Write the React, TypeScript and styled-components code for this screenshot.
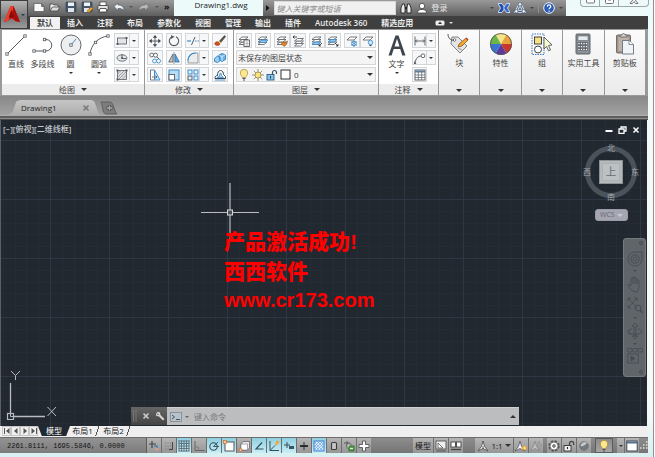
import React from "react";
import styled, { createGlobalStyle, css } from "styled-components";

const Global = createGlobalStyle`
  * { box-sizing: border-box; }
  html, body { margin: 0; padding: 0; }
  body {
    font-family: "Open Sans", "Noto Sans CJK SC", sans-serif;
    font-size: 8px;
    line-height: 10px;
    color: #333;
    background: #f4fbfb;
  }
  button, input, select {
    font: inherit;
    color: inherit;
    margin: 0;
    padding: 0;
    border: 0;
    background: none;
    border-radius: 0;
    outline: 0;
    appearance: none;
  }
  svg { display: block; flex: none; }
`;

/* ---------- drawings ---------- */

const INK = "#555a60";
const BLUE = "#3d8ccc";

type Drawing = { w: number; h: number; art: React.ReactNode };

const node = (x: number, y: number) => (
  <rect x={x - 1.2} y={y - 1.2} width="2.4" height="2.4" fill="#fff" stroke={INK} strokeWidth=".8" />
);

const layerStack = (
  <g fill="#fff" stroke="#555b60" strokeWidth=".8">
    <path d="M1 9.500 4 7h6l-3 2.500z" />
    <path d="M1 7 4 4.500h6L7 7z" />
    <path d="M1 4.500 4 2h6L7 4.500z" />
  </g>
);

const drawings: Record<string, Drawing> = {
  logo: {
    w: 18, h: 20,
    art: (
      <>
        <path d="M1 18 8 1h3l7 17-5-1-4-3-4 3z" fill="#c5160d" />
        <path d="M8 1h3l-1 8-5 8-4 1z" fill="#e8412f" />
        <path d="M9 5 12 13 9 14 6 13z" fill="#8b0b06" />
        <path d="M10 9 13 17l5 1-7-17z" fill="#a90f0a" />
      </>
    ),
  },
  newFile: { w: 12, h: 12, art: <path d="M1 2.500h7.500l2.500 3v5H1z M8.500 2.500v3H11" fill="#f8f8f8" stroke="#555" strokeWidth=".7" /> },
  open: {
    w: 12, h: 12,
    art: <><path d="M1 10V3h3l1 1h4v2" fill="#eee" stroke="#444" strokeWidth=".8" /><path d="M1 10 3.500 6H11L8.500 10z" fill="#d9dde0" stroke="#444" strokeWidth=".8" /></>,
  },
  save: {
    w: 12, h: 12,
    art: <><rect x="1" y="1" width="10" height="10" rx="1" fill="#43566b" stroke="#2e3c4c" strokeWidth=".6" /><rect x="3" y="1.500" width="6" height="3.500" fill="#f0f3f5" /><rect x="3" y="7" width="6" height="4" fill="#dfe5ea" /></>,
  },
  saveAs: {
    w: 12, h: 12,
    art: <><rect x="1" y="1" width="10" height="10" rx="1" fill="#43566b" stroke="#2e3c4c" strokeWidth=".6" /><rect x="3" y="1.500" width="6" height="3.500" fill="#f0f3f5" /><rect x="3" y="7" width="5" height="4" fill="#dfe5ea" /><path d="m6 10 4-4 2 1.500-4 4z" fill="#f0a32c" stroke="#87571b" strokeWidth=".5" /></>,
  },
  print: {
    w: 12, h: 12,
    art: <><rect x="3" y="1" width="6" height="4" fill="#fff" stroke="#444" strokeWidth=".7" /><rect x=".8" y="4.500" width="10.400" height="4.500" rx="1" fill="#e4e4e4" stroke="#333" strokeWidth=".8" /><path d="M3 7.500h6l1 3.500H2z" fill="#fff" stroke="#333" strokeWidth=".8" /></>,
  },
  undo: { w: 12, h: 12, art: <path d="M1 5.500 5 2v2c4 0 6 2 6 6-1-2-3-2.500-6-2.500V9.500z" fill="#eef1f3" stroke="#4a5a6a" strokeWidth=".7" /> },
  redo: { w: 12, h: 12, art: <path d="M11 5.500 7 2v2C3 4 1 6 1 10c1-2 3-2.500 6-2.500V9.500z" fill="#b9b9b9" stroke="#6d6d6d" strokeWidth=".7" /> },
  binoculars: {
    w: 12, h: 12,
    art: <><path d="M1 11V6l1.500-4h2L5 6v5zM7 11V6l.5-4h2L11 6v5z" fill="#eee" stroke="#222" strokeWidth=".9" /><path d="M5 5h2v2H5z" fill="#222" /></>,
  },
  user: {
    w: 12, h: 12,
    art: <><circle cx="6" cy="4" r="2.700" fill="#fff" stroke="#3c3c3c" strokeWidth=".8" /><path d="M1.500 11c0-3 2-3.500 4.500-3.500s4.500.5 4.500 3.500z" fill="#fff" stroke="#3c3c3c" strokeWidth=".8" /></>,
  },
  exchange: { w: 12, h: 12, art: <><path d="M0 1.500h4L7 6l-3 4.500H0L2.500 6z" fill="#2450a8" stroke="#dfe8ff" strokeWidth=".8" /><path d="M12 1.500H8.500L5.500 6l3 4.500H12L9.500 6z" fill="#3567c9" stroke="#dfe8ff" strokeWidth=".8" /></> },
  network: {
    w: 12, h: 12,
    art: <g fill="none" stroke="#e6efff" strokeWidth="2.600"><path d="M6 2 2 9.500h8z" /><g stroke="#3c557c" strokeWidth=".9"><path d="M6 2 2 9.500h8z" /></g><g fill="#fff" stroke="#3c557c" strokeWidth=".8"><circle cx="6" cy="2.300" r="1.700" /><circle cx="2.300" cy="9.300" r="1.700" /><circle cx="9.700" cy="9.300" r="1.700" /></g></g>,
  },
  help: {
    w: 12, h: 12,
    art: <><circle cx="6" cy="6" r="5.300" fill="#2b5bb5" stroke="#e9f0fb" strokeWidth="1" /><path d="M4.300 4.700c0-2.400 3.500-2.200 3.500-.2 0 1.300-1.700 1.300-1.700 2.800M6.100 8.500v1.200" fill="none" stroke="#fff" strokeWidth="1.200" /></>,
  },
  line: { w: 22, h: 22, art: <><path d="M2 20 20 2" stroke={INK} strokeWidth="1" />{node(2, 20)}{node(20, 2)}</> },
  polyline: { w: 22, h: 22, art: <><path d="M2 17h12a5.700 5.700 0 0 0 0-11.500h-1" fill="none" stroke={INK} />{node(2, 17)}{node(12.500, 17)}{node(12.500, 5.500)}</> },
  circle: {
    w: 22, h: 22,
    art: <><circle cx="11" cy="11" r="10" fill="#eceef0" stroke={INK} strokeWidth=".9" /><path d="M11 11 16 5" stroke="#2f7fc8" strokeWidth=".9" />{node(11, 11)}</>,
  },
  arc: { w: 22, h: 22, art: <><path d="M2 20C3 11 10 3 20 2" fill="none" stroke={INK} />{node(2, 20)}{node(7.500, 8.500)}{node(20, 2)}</> },
  rect: { w: 12, h: 12, art: <><rect x="1.500" y="3" width="9" height="6" fill="#e2e5e8" stroke={INK} strokeWidth=".8" /><g fill={INK}><rect x=".5" y="8" width="2" height="2" /><rect x="9.500" y="2" width="2" height="2" /></g></> },
  ellipse: { w: 12, h: 12, art: <><ellipse cx="6" cy="6" rx="5" ry="3.200" fill="#e2e5e8" stroke={INK} strokeWidth=".8" /><path d="M6 2v4.500h4" stroke={INK} strokeWidth=".9" fill="none" /><circle cx="6" cy="6" r="1" fill={INK} /></> },
  hatch: { w: 12, h: 12, art: <><rect x="1.500" y="1.500" width="9" height="9" fill="#ddd" stroke={INK} strokeWidth=".8" /><path d="M1.500 5 5 1.500M1.500 8.500l7-7M2.500 10.500l8-8M6 10.500 10.500 6" stroke="#8c9399" strokeWidth=".8" /><g fill={INK}><rect x=".5" y=".5" width="2" height="2" /><rect x="9.500" y=".5" width="2" height="2" /><rect x=".5" y="9.500" width="2" height="2" /></g></> },
  move: { w: 12, h: 12, art: <><path d="M6 2v8M2 6h8" stroke={INK} strokeWidth=".9" /><path d="m6 0 2.200 2.800H3.800zM6 12 3.800 9.200h4.400zM0 6l2.800-2.200v4.400zM12 6 9.200 8.200V3.800z" fill="#3f454b" /></> },
  rotate: { w: 12, h: 12, art: <><path d="M4 1.700a4.700 4.700 0 1 0 4 0" fill="none" stroke={INK} strokeWidth="1.100" /><path d="M3 0v4L6.500 1.800z" fill={INK} /></> },
  trim: { w: 12, h: 12, art: <><path d="M0 6h4" stroke={BLUE} strokeWidth="1.200" /><path d="M4.500 10 8 2" stroke={INK} strokeWidth="1" /><path d="M8 6h1.500M10.500 6H12" stroke={BLUE} strokeWidth="1" /></> },
  erase: { w: 12, h: 12, art: <><path d="m5 6.500 5.500-6 1.200 1L6.500 8z" fill="#5d5348" stroke="#3c352d" strokeWidth=".5" /><path d="m4 7 1.500-1 1.500 1.500L6 9z" fill="#f0c04c" /><path d="M.5 9c1-2.500 2.500-2.500 3.500-2l2 2C5 11 2.500 11 .5 9z" fill="#d14c25" stroke="#8a2f17" strokeWidth=".5" /></> },
  copy: { w: 12, h: 12, art: <g fill="#fff" strokeWidth=".9"><g stroke={INK}><circle cx="2.700" cy="3" r="1.900" /><circle cx="6.500" cy="3.200" r="2" /></g><g stroke={BLUE}><circle cx="5.500" cy="9" r="1.900" /><circle cx="9.500" cy="9" r="2" /></g><path d="m8 5 2 2" stroke={INK} /></g> },
  mirror: { w: 12, h: 12, art: <><path d="M5 2v8H.7z" fill="#bfc5ca" stroke={INK} strokeWidth=".8" /><path d="M7 2v8h4.300z" fill="#5ea7df" stroke="#2d6ea8" strokeWidth=".8" /><path d="M6 0v12" stroke={INK} strokeWidth=".6" /></> },
  fillet: { w: 12, h: 12, art: <><path d="M1 11V8a7 7 0 0 1 7-7h3v10z" fill="#e9ecef" stroke="#777" strokeWidth=".7" /><path d="M1 8.500A7.500 7.500 0 0 1 8.500 1" fill="none" stroke={BLUE} strokeWidth="1.200" /></> },
  explode: { w: 12, h: 12, art: <><path d="M.5 6.500 3.500 4l3 1v3.500l-3 2-3-1z" fill="#9bd0f2" stroke="#2d7fbe" strokeWidth=".9" /><path d="m5 3 3-1.500L11.500 3v4.500L8 9.500 5.500 8z" fill="#6db4e6" stroke="#2d7fbe" strokeWidth=".9" /><path d="m5.500 3.500 2.500 1 3-1.500M8 4.500v4.500" stroke="#e9f6ff" strokeWidth=".8" fill="none" /></> },
  stretch: { w: 12, h: 12, art: <><path d="M1.500 1h4v10h-4z" fill="#fff" stroke={INK} strokeWidth=".8" /><path d="M5.500 1 11 11H5.500z" fill="#c9e4f7" stroke={BLUE} strokeWidth=".9" /><path d="M3 8h5M6.500 6.500 8 8 6.500 9.500" stroke={INK} fill="none" strokeWidth=".8" /></> },
  scale: { w: 12, h: 12, art: <><rect x="1" y="1" width="10" height="10" fill="#b9dcf5" stroke={BLUE} strokeWidth="1" /><rect x="1" y="5.500" width="5.500" height="5.500" fill="#fff" stroke={INK} strokeWidth=".9" /></> },
  array: { w: 12, h: 12, art: <g fill="#e4f2fc" stroke={BLUE} strokeWidth="1"><rect x="1" y="1" width="4" height="4" /><rect x="7" y="1" width="4" height="4" /><rect x="1" y="7" width="4" height="4" stroke={INK} /><rect x="7" y="7" width="4" height="4" /></g> },
  offset: { w: 12, h: 12, art: <><path d="M1 9.500c0-2 1-3 2.500-3 0-3 1-5 3-5s3 2 3 4l2 2v2z" fill="#fff" stroke="#3d444b" strokeWidth="1" /><path d="M3 8.500h6.500L7.500 6.500C7.500 4.500 7 4 6.500 4s-1 1.500-1 3z" fill="#a6d4f4" stroke={BLUE} strokeWidth=".8" /><path d="M1 11h10.500" stroke={BLUE} strokeWidth=".9" /></> },
  layerProps: { w: 12, h: 12, art: <>{layerStack}<rect x="6" y="5" width="5.500" height="6.500" fill="#fff" stroke="#444" strokeWidth=".8" /><path d="M7.500 7h3M7.500 8.500h3M7.500 10h3" stroke="#777" strokeWidth=".6" /></> },
  layerBlue: { w: 12, h: 12, art: <>{layerStack}<path d="M2 7.500 5 5h6L8 7.500z" fill="#8dc6f2" stroke={BLUE} strokeWidth=".9" /></> },
  layerOrange: { w: 12, h: 12, art: <>{layerStack}<path d="m6 7 3 1 2.500-2-1 3.500L8 11.500 5.500 9z" fill="#e78b2c" stroke="#8a4c14" strokeWidth=".6" /></> },
  layerArrow: { w: 12, h: 12, art: <><g transform="translate(1.500 1.500)">{layerStack}</g><path d="M5 2H1M2.500.5 1 2l1.500 1.500" stroke="#222" fill="none" strokeWidth=".8" /></> },
  layerIso: { w: 12, h: 12, art: <>{layerStack}<path d="M1 9.500 4 7h6l-3 2.500z" fill="#8dc6f2" stroke={BLUE} strokeWidth=".8" /><path d="m11 8-3 3M8 9v2h2" stroke="#222" fill="none" strokeWidth=".8" /></> },
  layerUniso: { w: 12, h: 12, art: <>{layerStack}<path d="M1 7 4 4.500h6L7 7z" fill="#8dc6f2" stroke={BLUE} strokeWidth=".8" /><path d="m8 8 3 3M11 9v2H9" stroke="#222" fill="none" strokeWidth=".8" /></> },
  layerFreeze: { w: 12, h: 12, art: <><path d="M1 5 4 2h7L8 5z" fill="#fff" stroke="#555" strokeWidth=".8" /><circle cx="8" cy="8.500" r="2.300" fill="#fff" stroke={BLUE} strokeWidth="1" /><path d="M8 5v7M5 6.500l6 4M11 6.500l-6 4" stroke={BLUE} strokeWidth=".7" /></> },
  layerOff: { w: 12, h: 12, art: <><path d="M1 5 4 2h7L8 5z" fill="#fff" stroke="#555" strokeWidth=".8" /><circle cx="8.500" cy="7.500" r="2.200" fill="#d6ebfb" stroke={BLUE} strokeWidth=".9" /><path d="M7.500 10.500h2" stroke="#444" strokeWidth="1.200" /></> },
  bulb: { w: 12, h: 12, art: <><path d="M4.300 8.500C4 7 2.300 6 2.300 4a3.700 3.700 0 0 1 7.400 0c0 2-1.700 3-2 4.500z" fill="#fbe88d" stroke="#a8873a" strokeWidth=".7" /><path d="M4.500 9.500h3M5 11h2" stroke="#555" strokeWidth="1" /></> },
  sun: { w: 12, h: 12, art: <><path d="M6 0v12M0 6h12M1.800 1.800l8.400 8.400M10.200 1.800l-8.400 8.400" stroke="#8d7a4d" strokeWidth=".8" /><circle cx="6" cy="6" r="3" fill="#fbe27a" stroke="#8d7a4d" strokeWidth=".7" /></> },
  unlock: { w: 12, h: 12, art: <><path d="M6.500 6V3.500a2 2 0 0 1 4 0V5" fill="none" stroke="#39536b" strokeWidth="1.200" /><rect x="1" y="5.500" width="7" height="5.500" fill="#86c3ea" stroke="#2b5d84" strokeWidth=".9" /><path d="M4.500 7v2.500" stroke="#1d3f5b" strokeWidth="1" /></> },
  swatch: { w: 11, h: 11, art: <rect x="1" y="1" width="9" height="9" fill="#fff" stroke="#333" /> },
  textA: { w: 22, h: 22, art: <path d="M2.500 21.500 9.500 1.500h3L19.500 21.500h-3.200L14.200 15H7.700l-2.100 6.500zM8.500 12.500h5L11 4.800z" fill="#3f454c" /> },
  dimension: { w: 12, h: 12, art: <path d="M1 1.500v9M11 1.500v9M1 6h10M3 4.500 1.500 6 3 7.500M9 4.500 10.500 6 9 7.500" fill="none" stroke={INK} strokeWidth=".9" /> },
  leader: { w: 12, h: 12, art: <><path d="M1 11c1-5 3-7 6.500-7" fill="none" stroke={INK} strokeWidth="1" /><circle cx="9" cy="3.800" r="1.900" fill="#fff" stroke={INK} strokeWidth=".9" /><path d="M0 9v3h2.500z" fill={INK} /></> },
  tableGrid: { w: 12, h: 12, art: <><rect x="1" y="1" width="10" height="10" fill="#fff" stroke={INK} strokeWidth=".9" /><path d="M1 2.500h10" stroke="#62809c" strokeWidth="2" /><path d="M1 6h10M1 8.500h10M4.300 3v8M7.700 3v8" stroke={INK} strokeWidth=".7" /></> },
  block: {
    w: 24, h: 22,
    art: <><path d="M5 4h6l9 9-7 7-9-9z" fill="#e3e5e7" stroke="#70767b" strokeWidth=".9" /><circle cx="7.500" cy="7" r="1.300" fill="#fff" stroke="#666" strokeWidth=".8" /><path d="M7 7C4 8 1 5 1 1" fill="none" stroke="#444" strokeWidth=".9" /><path d="m12 11 7-6 2 2-6 6-4 1z" fill="#f3a632" stroke="#7d4c10" strokeWidth=".7" /><path d="m19 5 2 2" stroke="#b33" strokeWidth="1.500" /><path d="m11 15 4 2" stroke="#888" strokeWidth=".8" /></>,
  },
  wheel: {
    w: 22, h: 22,
    art: (
      <>
        <path d="M11 11 5.500 1.500a11 11 0 0 1 11 0z" fill="#f3e58a" />
        <path d="M11 11 16.500 1.500A11 11 0 0 1 22 11z" fill="#e8a33c" />
        <path d="M11 11h11a11 11 0 0 1-5.500 9.500z" fill="#c9362c" />
        <path d="M11 11 16.500 20.500a11 11 0 0 1-11 0z" fill="#5a3a9c" />
        <path d="M11 11 5.500 20.500A11 11 0 0 1 0 11z" fill="#3b74d0" />
        <path d="M11 11H0A11 11 0 0 1 5.500 1.500z" fill="#6db548" />
        <circle cx="11" cy="11" r="10.500" fill="none" stroke="#5b5b5b" strokeWidth=".9" />
      </>
    ),
  },
  group: {
    w: 22, h: 22,
    art: <><rect x="1" y="1" width="12" height="20.500" fill="none" stroke="#3c78c0" strokeWidth="1" strokeDasharray="1.500 1" /><rect x="3.500" y="4" width="7" height="7" fill="#f6e27e" stroke="#444" strokeWidth="1" /><circle cx="7" cy="16.500" r="3.500" fill="#fff" stroke="#444" strokeWidth="1" /><path d="m13 4 8 8-3.500.5 2 4.500-2 .8-2-4.500L13 16z" fill="#fbf8cf" stroke="#37474f" strokeWidth=".8" /></>,
  },
  calculator: {
    w: 22, h: 22,
    art: <><rect x="4" y="1" width="14" height="20" rx="1" fill="#8b9198" stroke="#54595e" strokeWidth=".9" /><rect x="6" y="3" width="10" height="4.500" fill="#e3edf2" stroke="#555" strokeWidth=".5" /><g fill="#fff" stroke="#4a4f55" strokeWidth=".6">{[9.500, 12.500, 15.500].map((y) => [6, 8.500, 11, 13.500].map((x) => <rect key={`${x}-${y}`} x={x} y={y} width="2" height="2" />))}</g></>,
  },
  clipboard: {
    w: 22, h: 22,
    art: <><rect x="2.500" y="2" width="14" height="18" rx="1" fill="#a0938a" stroke="#6d625a" strokeWidth=".9" /><rect x="4.500" y="4" width="10" height="14" fill="#beb3aa" /><path d="M6 4V2h2c0-2 3-2 3 0h2v2z" fill="#d0d4d8" stroke="#555" strokeWidth=".7" /><path d="M8.500 7.500H15l4.500 4V21H8.500z" fill="#f0f4f8" stroke="#67727c" strokeWidth=".9" /><path d="M15 7.500v4h4.500" fill="#fff" stroke="#67727c" strokeWidth=".8" /></>,
  },
  panelToggle: { w: 10, h: 6, art: <><rect x=".5" y=".5" width="9" height="5" rx="1.500" fill="#eee" /><path d="M5 1.500 7 4H3z" fill="#333" /></> },
  close: { w: 8, h: 8, art: <path d="m1.500 1.500 5 5M6.500 1.500l-5 5" stroke="currentColor" strokeWidth="1.500" /> },
  mdiMin: { w: 8, h: 8, art: <path d="M.5 5h7" stroke="#fff" strokeWidth="2" /> },
  mdiRestore: { w: 9, h: 8, art: <path d="M3 3V1h5v4H6M1 3h5v4.500H1z" fill="none" stroke="#fff" strokeWidth="1.300" /> },
  wrench: { w: 10, h: 10, art: <path d="M1 2.500 2.500 1C5 .5 5.500 2 5.300 3.700L9.500 8 8 9.500 3.700 5.300C2 5.500.5 5 1 2.500L3 4l1-1z" fill="#d4d4d4" /> },
  prompt: { w: 12, h: 10, art: <><rect x=".5" y=".5" width="11" height="9" fill="#b9c2cc" stroke="#7d8893" strokeWidth=".8" /><path d="m2 3 2.500 2L2 7M6 7.500h4" fill="none" stroke="#455" strokeWidth="1" /></> },
  plusTab: { w: 18, h: 14, art: <><path d="M1 1h9c4 0 4 10 7 12H6C2 13 3 4 1 1z" fill="#7d7d7d" stroke="#555" strokeWidth=".8" /><path d="M9.500 4v6M6.500 7h6" stroke="#4f4f4f" strokeWidth="3" /><path d="M9.500 4.500v5M7 7h5" stroke="#a8a8a8" strokeWidth="1.400" /></> },
  grips: { w: 4, h: 12, art: <path d="M.5.5v11M3 .5v11" stroke="#999" strokeWidth="1" strokeDasharray="1 1" /> },
  winMin: { w: 9, h: 6, art: <rect x=".5" y="-1" width="8" height="4" rx="1" fill="#fff" stroke="#666" strokeWidth=".9" /> },
  winMax: { w: 9, h: 6, art: <><rect x=".5" y="-4" width="8" height="7.500" rx="1" fill="#fff" stroke="#666" strokeWidth=".9" /><path d="M3 0h3" stroke="#666" /></> },
  winClose: { w: 10, h: 6, art: <path d="m1 3.500 4-5 4 5H6.500L5 1.500 3.500 3.500z" fill="#fff" stroke="#666" strokeWidth=".9" /> },
  /* status bar */
  infer: { w: 12, h: 12, art: <><path d="M4 1v7M1 4h7" stroke="#444" strokeWidth="1.200" /><path d="M6 6h3v3" stroke="#35699f" fill="none" strokeWidth="1.200" /><circle cx="9" cy="9" r="1.500" fill="#e8a47c" /><path d="M9.500 5.500v3" stroke="#4f8fcf" /></> },
  snap: { w: 12, h: 12, art: <><path d="M2 3h7M2 6h7M2 9h7" stroke="#777" strokeWidth="1" strokeDasharray="1 1.500" /><path d="M9.500 2v7.500H6" stroke="#444" fill="none" strokeWidth="1" /></> },
  grid: { w: 12, h: 12, art: <path d="M.5 1h11M.5 3.500h11M.5 6h11M.5 8.500h11M.5 11h11M1 .5v11M3.500.5v11M6 .5v11M8.500.5v11M11 .5v11" stroke="#5f6a76" strokeWidth=".9" /> },
  ortho: { w: 12, h: 12, art: <><path d="M2 1v9.500h9.500" stroke="#666" fill="none" strokeWidth="1" /><path d="M2 7h3.500v3.500" stroke="#777" fill="none" strokeWidth=".8" /></> },
  polar: { w: 12, h: 12, art: <><circle cx="5.500" cy="6.500" r="3.700" fill="none" stroke="#33505f" strokeWidth="1.100" /><path d="m5.500 6.500 4.500-4.500M5.500 6.500H11" stroke="#33505f" strokeWidth=".9" /></> },
  osnap: { w: 12, h: 12, art: <><rect x="2" y="2" width="9" height="9" fill="#fff" stroke="#555" strokeWidth="1" /><rect x=".5" y=".5" width="3" height="3" fill="#f6c59c" stroke="#cf6e2c" strokeWidth=".7" /></> },
  osnap3d: { w: 12, h: 12, art: <><path d="M3 4 5 1.500h6.500V8L9.500 10H3z" fill="#e9ebee" stroke="#666" strokeWidth=".8" /><rect x="3" y="4" width="6.500" height="6" fill="#fff" stroke="#777" strokeWidth=".6" /><circle cx="2.500" cy="10" r="1.500" fill="#f6c59c" stroke="#cf5e2c" strokeWidth=".7" /></> },
  otrack: { w: 12, h: 12, art: <path d="M9 2.500 3 9h7.500" stroke="#33505f" fill="none" strokeWidth="1.200" /> },
  ducs: { w: 12, h: 12, art: <><path d="M2 1v9.500h9M2 10.500 7 5.500" stroke="#33505f" fill="none" strokeWidth="1" /><path d="m7 5 1.500-4.500 3 1L9 5z" fill="#f3a632" /></> },
  dyn: { w: 12, h: 12, art: <><path d="M4 2v6M1 5h6" stroke="#33505f" strokeWidth="1" /><path d="M6 6h5v3H6z" fill="#3b5560" /></> },
  lweight: { w: 12, h: 12, art: <><path d="M6 2v8" stroke="#333" strokeWidth="1" /><path d="M2 6h8" stroke="#222" strokeWidth="1.800" /></> },
  transparency: { w: 12, h: 12, art: <><rect x="1" y="1" width="10" height="10" fill="#dcecff" stroke="#3f7fce" strokeWidth="1" /><path d="m1 4 3-3M1 7l6-6M1 10l9-9M3 11l8-8M6 11l5-5M9 11l2-2M1 8l3 3M1 5l6 6M1 2l9 9M4 1l7 7M7 1l4 4" stroke="#5f9ae0" strokeWidth=".6" /></> },
  quickProps: { w: 12, h: 12, art: <rect x="3.500" y="2.500" width="5" height="7" rx="1" fill="#c4c4c4" stroke="#3c3c3c" strokeWidth="1.100" /> },
  selCycle: { w: 12, h: 12, art: <><path d="M4 1v6M1 3h6" stroke="#555" strokeWidth=".9" /><rect x="4" y="4" width="4" height="4" fill="#ddd" stroke="#555" strokeWidth=".7" /><rect x="6" y="6" width="5" height="5" fill="#59a94c" stroke="#2c6624" strokeWidth=".8" /><path d="M7 8.500h3" stroke="#fff" strokeWidth=".8" /></> },
  annoMonitor: { w: 12, h: 12, art: <path d="M4.500 1h3v3.500H11v3H7.500V11h-3V7.500H1v-3h3.500z" fill="#fff" stroke="#555" strokeWidth=".9" /> },
  layoutView: { w: 12, h: 12, art: <><rect x="1" y="1" width="10" height="8" fill="#eee" stroke="#555" strokeWidth=".9" /><path d="m3 3 5 5H3z" fill="#fff" stroke="#555" strokeWidth=".8" /><path d="M1 11h10" stroke="#555" /></> },
  quickView: { w: 12, h: 12, art: <><rect x="1" y="2" width="4.500" height="5" fill="#fff" stroke="#444" strokeWidth=".9" /><rect x="6.500" y="2" width="4.500" height="5" fill="#fff" stroke="#444" strokeWidth=".9" /><path d="M1 9.500h10" stroke="#444" strokeWidth="1.300" /></> },
  anno: { w: 12, h: 12, art: <><path d="m6 1 1.500 5.500L11 11 6 8.500 1 11l3.500-4.500z" fill="#fff" stroke="#444" strokeWidth=".8" /><path d="M6 6v3" stroke="#333" strokeWidth=".8" /></> },
  annoVis: { w: 12, h: 12, art: <><path d="m5 1 1.500 5.500L10 11 5 8.500 0 11l3.500-4.500z" fill="#fff" stroke="#555" strokeWidth=".8" /><circle cx="9.500" cy="8" r="2.300" fill="#f7a93a" /><circle cx="9.500" cy="8" r="1" fill="#fff2a8" /></> },
  annoAuto: { w: 12, h: 12, art: <><path d="m5 1 1.500 5.500L10 11 5 8.500 0 11l3.500-4.500z" fill="#c4c4c4" stroke="#888" strokeWidth=".8" /><path d="m9 1-2 5h2l-1 5 4-6H9.500z" fill="#aaa" stroke="#888" strokeWidth=".5" /></> },
  gear: { w: 12, h: 12, art: <><circle cx="6" cy="6" r="4.600" fill="none" stroke="#555" strokeWidth="2.200" strokeDasharray="2.300 1.310" /><circle cx="6" cy="6" r="4" fill="#f8f8f8" stroke="#555" strokeWidth=".7" /><circle cx="6" cy="6" r="1.400" fill="#999" stroke="#555" strokeWidth=".7" /></> },
  toolbarLock: { w: 12, h: 12, art: <><path d="M6.500 6V3.500a2 2 0 0 1 4.200 0V5" fill="none" stroke="#444" strokeWidth="1.200" /><rect x="1" y="5.500" width="7" height="5.500" fill="#eee" stroke="#333" strokeWidth=".9" /><path d="M4.500 7v2" stroke="#222" /></> },
  sphere: { w: 12, h: 12, art: <><circle cx="6" cy="6" r="4.300" fill="#74797d" stroke="#666a6e" strokeWidth=".7" /><path d="M2.500 6A4 4 0 0 1 9 3C7 5 5 7 2.500 6z" fill="#c4c8cb" /></> },
  cleanScreen: { w: 12, h: 12, art: <><rect x=".8" y="1" width="10.400" height="10" fill="#fff" stroke="#3c4650" strokeWidth="1" /><path d="M1 2.500h10" stroke="#54718c" strokeWidth="2" /></> },
  sizeGrip: { w: 9, h: 9, art: <path d="M7 1h1.500M4 4h1.500M7 4h1.500M1 7h1.500M4 7h1.500M7 7h1.500" stroke="#e6e3cf" strokeWidth="1.600" /> },
  first: { w: 8, h: 8, art: <><path d="M1.500 1v6" stroke="#555" /><path d="M6.500 1v6L3 4z" fill="#555" /></> },
  prev: { w: 8, h: 8, art: <path d="M5.500 1v6L2 4z" fill="#555" /> },
  next: { w: 8, h: 8, art: <path d="M2.500 1v6L6 4z" fill="#555" /> },
  last: { w: 8, h: 8, art: <><path d="M6.500 1v6" stroke="#555" /><path d="M1.500 1v6L5 4z" fill="#555" /></> },
  navClose: { w: 4, h: 4, art: <circle cx="2" cy="2" r="1.500" fill="none" stroke="#454c51" strokeWidth=".9" /> },
  navWheel: { w: 16, h: 16, art: <g fill="none" stroke="#454c51"><path d="M8 1h7v7a7 7 0 1 1-7-7z" strokeWidth=".9" /><circle cx="8" cy="8" r="4.200" /><circle cx="8" cy="8" r="2" strokeWidth=".8" /></g> },
  navPan: { w: 16, h: 18, art: <path d="M5 16C3 14 2 12 .8 10c.7-1.200 2-.5 3.200 1V4c0-1.300 1.700-1.300 2 0V2.500c.2-1.300 1.800-1.300 2 0V4c.3-1.300 1.900-1.100 2 0v1.500c.4-1 1.900-.8 2 .2V11c0 3-1 4.500-2 6zM6 4v5M8 4v5M10 5v4" fill="none" stroke="#454c51" strokeWidth=".9" /> },
  navZoom: { w: 16, h: 18, art: <g fill="none" stroke="#454c51"><path d="m1 2 9 10M10 2 1 12M1 5V2h3M7 2h3v3M1 9v3h3" strokeWidth=".9" /><circle cx="11" cy="12" r="3" /><path d="m13 14 2.500 3" strokeWidth="1.500" /></g> },
  navOrbit: { w: 16, h: 18, art: <g fill="none" stroke="#454c51" strokeWidth=".9"><path d="M7 4v10H9V4h2L8 1 5 4zM5 14l3 3 3-3z" /><path d="M5 7C-1 8-1 12 8 12s8-4 3-5M3 9l-2 2 3 2" /></g> },
  navMotion: { w: 16, h: 16, art: <g fill="none" stroke="#454c51" strokeWidth=".9"><rect x=".5" y=".5" width="4.500" height="3.500" rx="1" /><rect x="5.700" y=".5" width="4.500" height="3.500" rx="1" /><rect x="11" y=".5" width="4.500" height="3.500" rx="1" /><rect x=".8" y="6" width="10.500" height="9" /><path d="m4 8 4 2.500L4 13z" fill="#454c51" /></g> },
};

const Icon = ({ name, size }: { name: string; size?: number }) => {
  const d = drawings[name];
  const k = size ? size / d.w : 1;
  return (
    <svg width={Math.round(d.w * k)} height={Math.round(d.h * k)} viewBox={`0 0 ${d.w} ${d.h}`} aria-hidden="true">
      {d.art}
    </svg>
  );
};

const Caret = styled.span<{ $color?: string; $size?: number; $up?: boolean }>`
  flex: none;
  width: 0;
  height: 0;
  border: ${(p) => p.$size ?? 2}px solid transparent;
  ${(p) => (p.$up ? css`border-top-width: 0; border-bottom-color: ${p.$color ?? "#333"};` : css`border-bottom-width: 0; border-top-color: ${p.$color ?? "#333"};`)}
`;

/* ---------- frame and header ---------- */

const Frame = styled.div`
  display: flex;
  flex-direction: column;
  height: 100vh;
  min-width: 640px;
  overflow: hidden;
  padding-bottom: 4px;
  background: linear-gradient(#eefafa, #f7f9f9 30%, #f7f9f9 90%, #d8f0f1);
  box-shadow: inset -1px 0 #fff, inset -2px 0 #8d9292;
`;

const Header = styled.header`
  display: flex;
  flex: none;
  height: 29px;
`;

const AppButton = styled.button`
  display: flex;
  align-items: center;
  justify-content: center;
  gap: 1px;
  flex: none;
  width: 28px;
  border: 1px solid #3c3c3c;
  background: linear-gradient(#b5b5b5, #777 60%, #9b9b9b);
`;

const HeaderRows = styled.div`
  display: flex;
  flex-direction: column;
  flex: 1;
`;

const TitleRow = styled.div`
  display: flex;
  height: 16px;
`;

const Strip = styled.div<{ $grow?: boolean; $gap: number; $pad: string }>`
  display: flex;
  align-items: center;
  gap: ${(p) => p.$gap}px;
  flex: ${(p) => (p.$grow ? 1 : "none")};
  padding: ${(p) => p.$pad};
  background: linear-gradient(#999, #707070 70%, #5d5d5d);
`;

const RedoGroup = styled.div`
  display: flex;
  align-items: center;
  gap: 5px;
`;

const IconButton = styled.button`
  display: flex;
  align-items: center;
  justify-content: center;
  flex: none;
`;

const DocTitle = styled.h1`
  flex: none;
  width: 89px;
  margin: 0;
  padding-left: 21px;
  font-size: 8px;
  font-weight: 400;
  line-height: 10px;
  color: #222;
  background: #edfafa;
`;

const More = styled.span`
  color: #111;
  font-weight: 700;
  font-size: 9px;
`;

const Search = styled.input`
  flex: none;
  width: 122px;
  height: 14px;
  margin-bottom: 1px;
  padding: 2px 2px 0;
  border: 1px solid #d9d9d9;
  background: #f0f0f0;
  &::placeholder { color: #8c8c8c; font-style: italic; opacity: 1; }
`;

const SignIn = styled.button`
  color: #e6e6e6;
  flex: none;
`;

const Spacer = styled.span`
  flex: 1;
`;

const Divider = styled.span`
  width: 1px;
  height: 10px;
  background: #8f8f8f;
`;

const Glass = styled.div`
  display: flex;
  align-items: flex-start;
  justify-content: flex-end;
  flex: none;
  width: 89px;
  padding-right: 6px;
`;

const WindowButton = styled.button<{ $w: number }>`
  display: flex;
  justify-content: center;
  width: ${(p) => p.$w}px;
  height: 7px;
  border: 1px solid #9fa8a8;
  border-width: 0 0 1px 1px;
  &:first-child { border-bottom-left-radius: 4px; }
  &:last-child { border-right-width: 1px; border-bottom-right-radius: 4px; }
`;

const TabRow = styled.nav`
  display: flex;
  align-items: flex-end;
  height: 13px;
  margin-right: 7px;
  padding-left: 2px;
  background: #3f3f3f;
`;

const RibbonTab = styled.button<{ $active?: boolean }>`
  height: 12px;
  padding: 0 7px;
  line-height: 12px;
  font-weight: 600;
  color: ${(p) => (p.$active ? "#444" : "#ececec")};
  background: ${(p) => (p.$active ? "#f2f2f2" : "none")};
`;

const TabExtra = styled.div`
  display: flex;
  align-items: center;
  gap: 4px;
  height: 12px;
  padding-left: 15px;
`;

/* ---------- ribbon ---------- */

const Ribbon = styled.section`
  display: flex;
  flex: none;
  gap: 1px;
  height: 67px;
  margin-right: 7px;
  padding: 1px 3px 1px 2px;
  background: #999;
`;

const Panel = styled.section<{ $w?: number }>`
  display: flex;
  flex-direction: column;
  flex: ${(p) => (p.$w ? "none" : "1 1 0")};
  width: ${(p) => (p.$w ? `${p.$w}px` : "auto")};
  background: #fff;
`;

const PanelBody = styled.div`
  display: flex;
  flex: 1;
  padding: 3px 2px 0;
`;

const PanelTitle = styled.button`
  display: flex;
  align-items: center;
  justify-content: center;
  gap: 6px;
  height: 11px;
  color: #444;
  background: #ececec;
`;

const BigButton = styled.button<{ $w: number }>`
  display: flex;
  flex-direction: column;
  align-items: center;
  align-self: flex-start;
  flex: none;
  gap: 3px;
  width: ${(p) => p.$w}px;
  padding-top: 1px;
  color: #444;
  white-space: nowrap;
`;

const ToolGrid = styled.div<{ $cols: string; $gap: number }>`
  display: grid;
  grid-template-columns: ${(p) => p.$cols};
  grid-auto-rows: 15px;
  gap: 2px ${(p) => p.$gap}px;
  align-content: start;
`;

const Tool = styled.button<{ $joined?: boolean }>`
  display: flex;
  align-items: center;
  justify-content: center;
  height: 15px;
  border: 1px solid #d4d6d8;
  background: #f6f7f8;
  ${(p) => p.$joined && css`margin-left: -1px;`}
`;

const Split = styled.div`
  display: grid;
  grid-template-columns: 1fr 9px;
`;

const LayerBody = styled.div`
  display: flex;
  flex-direction: column;
  flex: 1;
  gap: 2px;
  padding: 3px 2px 0;
`;

const LayerTools = styled.div`
  display: flex;
  justify-content: space-between;
`;

const ToolPair = styled.div`
  display: grid;
  grid-auto-flow: column;
  grid-auto-columns: 16px;
`;

const Field = styled.label`
  display: flex;
  align-items: center;
  gap: 3px;
  height: 15px;
  padding: 0 2px 0 1px;
  border: 1px solid #d4d6d8;
  background: #f4f4f5;
`;

const Select = styled.select`
  flex: 1;
  min-width: 0;
  height: 13px;
  color: #444;
`;

const LayerIcons = styled.span`
  display: flex;
  align-items: center;
  gap: 2px;
`;

const TallPanel = styled.button`
  display: flex;
  flex-direction: column;
  align-items: center;
  flex: 1 1 0;
  gap: 3px;
  padding: 3px 0 3px;
  color: #444;
  white-space: nowrap;
  background: linear-gradient(#fbfbfb, #ebebeb);
`;

/* ---------- drawing tabs ---------- */

const FileStrip = styled.div`
  display: flex;
  align-items: flex-end;
  flex: none;
  height: 19px;
  margin-right: 7px;
  padding-left: 8px;
  background: linear-gradient(#888, #a2a2a2);
`;

const FileTab = styled.div`
  display: flex;
  align-items: center;
  justify-content: space-between;
  width: 92px;
  height: 15px;
  padding: 0 10px 0 13px;
  color: #222;
  background: linear-gradient(#c6c6c6, #adadad);
  clip-path: polygon(0 100%, 5% 80%, 9% 10%, 13% 0, 91% 0, 94% 12%, 98% 80%, 100% 100%);
  button { color: #777; }
`;

const DocEdge = styled.div`
  flex: none;
  height: 5px;
  margin-right: 7px;
  background: linear-gradient(#acacac 0 1px, #5e5e5e 1px 3px, #8d8d8d 3px 4px, #4c4c4c 4px);
`;

/* ---------- model space ---------- */

const Canvas = styled.main`
  position: relative;
  flex: 1;
  min-height: 0;
  margin-right: 8px;
  overflow: hidden;
  background: #212830;
  border-left: 1px solid #59606a;
`;

const GridLines = styled.svg`
  position: absolute;
  inset: 0;
  width: 100%;
  height: 100%;
`;

const ViewLabel = styled.div`
  position: absolute;
  left: 2px;
  top: 4px;
  color: #e4e6e8;
`;

const MdiButtons = styled.div`
  position: absolute;
  right: 7px;
  top: 6px;
  display: flex;
  gap: 5px;
  color: #fff;
`;

const Cursor = styled.svg`
  position: absolute;
  left: 200px;
  top: 63px;
`;

const Notice = styled.div`
  position: absolute;
  left: 223px;
  top: 107px;
  color: #fe0000;
  font: 900 21px/30px "Liberation Sans", "Noto Sans CJK SC", sans-serif;
  white-space: nowrap;
  p { margin: 0; }
`;

const NoticeLink = styled.a`
  display: block;
  color: inherit;
  font-size: 20px;
  line-height: 26px;
  text-decoration: none;
`;

const Compass = styled.svg`
  position: absolute;
  right: 7px;
  top: 22px;
`;

const Wcs = styled.button`
  position: absolute;
  right: 19px;
  top: 89px;
  display: flex;
  align-items: center;
  justify-content: space-between;
  width: 33px;
  height: 12px;
  padding: 0 4px;
  border: 1px solid #9a9ba8;
  border-radius: 3px;
  color: #666975;
  font-size: 7px;
  background: #a5a6b2;
`;

const NavBar = styled.nav`
  position: absolute;
  right: 1px;
  top: 118px;
  display: flex;
  flex-direction: column;
  align-items: center;
  gap: 3px;
  width: 23px;
  padding: 2px;
  border: 1px solid #767b7e;
  border-radius: 3px;
  background: #5f6568;
`;

const NavCorner = styled(IconButton)`
  align-self: flex-end;
`;

const Ucs = styled.svg`
  position: absolute;
  left: 5px;
  bottom: 6px;
`;

const CommandBar = styled.div`
  position: absolute;
  left: 130px;
  bottom: 1px;
  display: flex;
  width: 60%;
  height: 18px;
`;

const CommandTools = styled.div`
  display: flex;
  align-items: center;
  justify-content: space-between;
  flex: none;
  width: 36px;
  padding: 0 2px;
  color: #d0d0d0;
  background: linear-gradient(#666, #444);
`;

const CommandLine = styled.label`
  display: flex;
  align-items: center;
  flex: 1;
  gap: 3px;
  padding: 0 3px;
  background: #bbbdbe;
  border-top: 1px solid #d0d0d0;
  input { flex: 1; min-width: 0; padding-left: 2px; }
  input::placeholder { color: #75787b; opacity: 1; }
`;

/* ---------- layout tabs and status bar ---------- */

const LayoutTabs = styled.div`
  display: flex;
  align-items: flex-start;
  flex: none;
  height: 11px;
  margin-right: 7px;
  padding-left: 2px;
  background: #efefef;
`;

const PageButton = styled.button`
  display: flex;
  align-items: center;
  justify-content: center;
  width: 9px;
  height: 10px;
  border: 1px solid #c6c6c6;
`;

const LayoutTab = styled.button<{ $active?: boolean }>`
  width: ${(p) => (p.$active ? 32 : 31)}px;
  height: 10px;
  padding-right: ${(p) => (p.$active ? 0 : 6)}px;
  line-height: 10px;
  color: ${(p) => (p.$active ? "#fff" : "#222")};
  background: ${(p) => (p.$active ? "#212830" : "linear-gradient(108deg, transparent 0 27px, #555 27px 28px, transparent 28px)")};
  ${(p) => p.$active && css`clip-path: polygon(0 0, 100% 0, 88% 100%, 12% 100%);`}
`;

const StatusBar = styled.footer`
  display: flex;
  align-items: stretch;
  flex: none;
  height: 16px;
  margin-right: 7px;
  border-top: 1px solid #6d6d6d;
  background: linear-gradient(#8d8d8d, #757575);
`;

const Coordinates = styled.output`
  width: 147px;
  padding-left: 7px;
  border-right: 1px solid #5c5c5c;
  color: #141414;
  font: 7px/16px "Liberation Mono", monospace;
  background: linear-gradient(#939393, #7c7c7c);
`;

const StatusGroup = styled.div`
  display: flex;
  gap: 1px;
  background: #6e6e6e;
`;

const Toggle = styled.button<{ $on?: boolean; $w?: number }>`
  display: flex;
  align-items: center;
  justify-content: center;
  gap: 2px;
  width: ${(p) => p.$w ?? 14}px;
  color: #161616;
  white-space: nowrap;
  background: ${(p) => (p.$on ? "linear-gradient(#8fcfe0, #c9eef6)" : "linear-gradient(#b5b5b5, #969696)")};
`;

const Gap = styled.span<{ $w: number }>`
  width: ${(p) => p.$w}px;
`;

const BulbButton = styled.button`
  display: flex;
  align-items: center;
  justify-content: center;
  width: 18px;
  border: 1px solid #5b5b5b;
  background: linear-gradient(#8b8b8b, #a5a5a5);
`;

/* ---------- pieces ---------- */

const SplitTool = ({ icon, label }: { icon: string; label: string }) => (
  <Split>
    <Tool aria-label={label}><Icon name={icon} /></Tool>
    <Tool $joined aria-label={`${label}选项`}><Caret /></Tool>
  </Split>
);

const Big = ({ icon, label, w, menu }: { icon: string; label: string; w: number; menu?: boolean }) => (
  <BigButton $w={w}>
    <Icon name={icon} />
    {label}
    {menu && <Caret />}
  </BigButton>
);

const ribbonTabs = ["默认", "插入", "注释", "布局", "参数化", "视图", "管理", "输出", "插件", "Autodesk 360", "精选应用"];

const tallPanels = [
  ["block", "块"],
  ["wheel", "特性"],
  ["group", "组"],
  ["calculator", "实用工具"],
  ["clipboard", "剪贴板"],
];

const toggles: [string, string, boolean][] = [
  ["infer", "推断约束", false],
  ["snap", "捕捉模式", false],
  ["grid", "栅格显示", true],
  ["ortho", "正交模式", false],
  ["polar", "极轴追踪", true],
  ["osnap", "对象捕捉", true],
  ["osnap3d", "三维对象捕捉", false],
  ["otrack", "对象捕捉追踪", true],
  ["ducs", "动态 UCS", true],
  ["dyn", "动态输入", true],
  ["lweight", "显示线宽", false],
  ["transparency", "显示透明度", true],
  ["quickProps", "快捷特性", false],
  ["selCycle", "选择循环", false],
  ["annoMonitor", "注释监视器", false],
];

const quickTools = ["newFile", "open", "save", "saveAs", "print", "undo"];

const ModelGrid = () => (
  <GridLines aria-hidden="true">
    <defs>
      <pattern id="grid" x="49" y="20" width="59" height="59" patternUnits="userSpaceOnUse">
        <path d="M12.500 0v59M24.500 0v59M35.500 0v59M47.500 0v59M0 12.500h59M0 24.500h59M0 35.500h59M0 47.500h59" stroke="#242c36" fill="none" />
        <path d="M.5 0v59M0 .5h59" stroke="#2e3744" fill="none" />
      </pattern>
    </defs>
    <rect width="100%" height="100%" fill="url(#grid)" />
  </GridLines>
);

export default function App() {
  return (
    <>
      <Global />
      <Frame>
        <Header>
          <AppButton aria-label="应用程序菜单">
            <Icon name="logo" size={17} />
            <Caret $color="#26364a" />
          </AppButton>
          <HeaderRows>
            <TitleRow>
              <Strip $gap={4} $pad="0 4px 2px 5px">
                {quickTools.map((n) => (
                  <IconButton key={n} aria-label={n}><Icon name={n} /></IconButton>
                ))}
                <RedoGroup>
                  <Caret $color="#555" />
                  <IconButton aria-label="redo"><Icon name="redo" /></IconButton>
                  <Caret $color="#555" />
                  <More>»</More>
                </RedoGroup>
              </Strip>
              <DocTitle>Drawing1.dwg</DocTitle>
              <Strip $grow $gap={4} $pad="0 3px 0 2px">
                <svg width="5" height="8" viewBox="0 0 5 8"><path d="M1 1v6l3.500-3z" fill="#111" /></svg>
                <Search aria-label="搜索" placeholder="键入关键字或短语" />
                <IconButton aria-label="搜索"><Icon name="binoculars" /></IconButton>
                <IconButton aria-label="用户"><Icon name="user" /></IconButton>
                <SignIn>登录</SignIn>
                <Spacer />
                <Caret $color="#444" />
                <IconButton aria-label="Exchange"><Icon name="exchange" /></IconButton>
                <IconButton aria-label="保持联系"><Icon name="network" /></IconButton>
                <Caret $color="#444" />
                <Divider />
                <IconButton aria-label="帮助"><Icon name="help" /></IconButton>
                <Caret $color="#444" />
              </Strip>
              <Glass>
                <WindowButton $w={19} aria-label="最小化"><Icon name="winMin" /></WindowButton>
                <WindowButton $w={19} aria-label="最大化"><Icon name="winMax" /></WindowButton>
                <WindowButton $w={31} aria-label="关闭"><Icon name="winClose" /></WindowButton>
              </Glass>
            </TitleRow>
            <TabRow>
              {ribbonTabs.map((t, i) => (
                <RibbonTab key={t} $active={i === 0}>{t}</RibbonTab>
              ))}
              <TabExtra>
                <IconButton aria-label="最小化功能区"><Icon name="panelToggle" /></IconButton>
                <Caret $color="#ddd" />
              </TabExtra>
            </TabRow>
          </HeaderRows>
        </Header>

        <Ribbon>
          <Panel $w={142}>
            <PanelBody>
              <Big icon="line" label="直线" w={24} />
              <Big icon="polyline" label="多段线" w={29} />
              <Big icon="circle" label="圆" w={27} menu />
              <Big icon="arc" label="圆弧" w={30} menu />
              <ToolGrid $cols="25px" $gap={0}>
                <SplitTool icon="rect" label="矩形" />
                <SplitTool icon="ellipse" label="椭圆" />
                <SplitTool icon="hatch" label="图案填充" />
              </ToolGrid>
            </PanelBody>
            <PanelTitle>绘图<Caret $size={3} /></PanelTitle>
          </Panel>
          <Panel $w={88}>
            <PanelBody>
              <ToolGrid $cols="16px 16px 24px 16px" $gap={3}>
                <Tool aria-label="移动"><Icon name="move" /></Tool>
                <Tool aria-label="旋转"><Icon name="rotate" /></Tool>
                <SplitTool icon="trim" label="修剪" />
                <Tool aria-label="删除"><Icon name="erase" /></Tool>
                <Tool aria-label="复制"><Icon name="copy" /></Tool>
                <Tool aria-label="镜像"><Icon name="mirror" /></Tool>
                <SplitTool icon="fillet" label="圆角" />
                <Tool aria-label="分解"><Icon name="explode" /></Tool>
                <Tool aria-label="拉伸"><Icon name="stretch" /></Tool>
                <Tool aria-label="缩放"><Icon name="scale" /></Tool>
                <SplitTool icon="array" label="阵列" />
                <Tool aria-label="偏移"><Icon name="offset" /></Tool>
              </ToolGrid>
            </PanelBody>
            <PanelTitle>修改<Caret $size={3} /></PanelTitle>
          </Panel>
          <Panel $w={144}>
            <LayerBody>
              <LayerTools>
                <ToolPair><Tool aria-label="图层特性"><Icon name="layerProps" /></Tool></ToolPair>
                <ToolPair><Tool aria-label="置为当前"><Icon name="layerBlue" /></Tool></ToolPair>
                <ToolPair>
                  <Tool aria-label="匹配图层"><Icon name="layerOrange" /></Tool>
                  <Tool aria-label="上一个"><Icon name="layerArrow" /></Tool>
                </ToolPair>
                <ToolPair>
                  <Tool aria-label="隔离"><Icon name="layerIso" /></Tool>
                  <Tool aria-label="取消隔离"><Icon name="layerUniso" /></Tool>
                </ToolPair>
                <ToolPair>
                  <Tool aria-label="冻结"><Icon name="layerFreeze" /></Tool>
                  <Tool aria-label="关闭图层"><Icon name="layerOff" /></Tool>
                </ToolPair>
              </LayerTools>
              <Field>
                <Select aria-label="图层状态"><option>未保存的图层状态</option></Select>
                <Caret $size={3} />
              </Field>
              <Field>
                <LayerIcons>
                  <Icon name="bulb" />
                  <Icon name="sun" />
                  <Icon name="unlock" />
                  <Icon name="swatch" />
                </LayerIcons>
                <Select aria-label="图层"><option>0</option></Select>
                <Caret $size={3} />
              </Field>
            </LayerBody>
            <PanelTitle>图层<Caret $size={3} /></PanelTitle>
          </Panel>
          <Panel $w={59}>
            <PanelBody>
              <Big icon="textA" label="文字" w={31} menu />
              <ToolGrid $cols="24px" $gap={0}>
                <SplitTool icon="dimension" label="标注" />
                <SplitTool icon="leader" label="引线" />
                <Split><Tool aria-label="表格"><Icon name="tableGrid" /></Tool></Split>
              </ToolGrid>
            </PanelBody>
            <PanelTitle>注释<Caret $size={3} /></PanelTitle>
          </Panel>
          {tallPanels.map(([icon, label]) => (
            <TallPanel key={label}>
              <Icon name={icon} />
              {label}
              <Spacer />
              <Caret $size={3} />
            </TallPanel>
          ))}
        </Ribbon>

        <FileStrip>
          <FileTab>
            Drawing1
            <IconButton aria-label="关闭图形"><Icon name="close" /></IconButton>
          </FileTab>
          <IconButton aria-label="新图形"><Icon name="plusTab" /></IconButton>
        </FileStrip>
        <DocEdge />

        <Canvas>
          <ModelGrid />
          <ViewLabel>[−][俯视][二维线框]</ViewLabel>
          <MdiButtons>
            <IconButton aria-label="最小化视口"><Icon name="mdiMin" /></IconButton>
            <IconButton aria-label="还原视口"><Icon name="mdiRestore" /></IconButton>
            <IconButton aria-label="关闭视口"><Icon name="close" /></IconButton>
          </MdiButtons>
          <Cursor width="58" height="58" viewBox="0 0 58 58" aria-hidden="true">
            <path d="M29 0v58M0 29.500h58" stroke="#b9bdc0" strokeWidth="1.200" />
            <rect x="26.500" y="27" width="5" height="5" fill="#4b525a" stroke="#d4d7d9" />
          </Cursor>
          <Notice>
            <p>产品激活成功!</p>
            <p>西西软件</p>
            <NoticeLink href="#">www.cr173.com</NoticeLink>
          </Notice>
          <Compass width="58" height="60" viewBox="0 0 58 60" fontSize="8" fill="#a4a9ae" textAnchor="middle">
            <circle cx="29" cy="30" r="23.500" fill="none" stroke="#4a525c" strokeWidth="5" />
            <rect x="17.500" y="18.500" width="23" height="23" fill="#b5b9ba" stroke="#8c9194" />
            <rect x="20.500" y="21.500" width="17" height="17" fill="#bcc1c3" stroke="#adb1b3" />
            <text x="29" y="34" fontSize="11" fill="#6a6f73">上</text>
            <text x="29" y="9">北</text>
            <text x="29" y="58">南</text>
            <text x="5" y="33">西</text>
            <text x="53" y="33">东</text>
          </Compass>
          <Wcs>WCS<Caret $size={3} $color="#c9cad2" /></Wcs>
          <NavBar aria-label="导航栏">
            <NavCorner aria-label="关闭导航栏"><Icon name="navClose" /></NavCorner>
            <Gap $w={1} />
            <IconButton aria-label="全导航控制盘"><Icon name="navWheel" /></IconButton>
            <Caret $color="#454c51" />
            <IconButton aria-label="平移"><Icon name="navPan" /></IconButton>
            <IconButton aria-label="范围缩放"><Icon name="navZoom" /></IconButton>
            <Caret $color="#454c51" />
            <IconButton aria-label="动态观察"><Icon name="navOrbit" /></IconButton>
            <Caret $color="#454c51" />
            <IconButton aria-label="ShowMotion"><Icon name="navMotion" /></IconButton>
            <Gap $w={1} />
            <NavCorner aria-label="导航栏菜单"><Icon name="navClose" /></NavCorner>
          </NavBar>
          <Ucs width="52" height="50" viewBox="0 0 52 50" aria-hidden="true">
            <g fill="none" stroke="#b8bcc0">
              <path d="M4.500 13v30M8 46.500h31" strokeWidth="1.300" />
              <rect x="1.500" y="43.500" width="6" height="6" strokeWidth="1.200" />
              <path d="M4.500 46.500h3M4.500 43.500v3" />
              <path d="m5 1 4.500 4.500L14 1M9.500 5.500V10M41.500 37l8.500 9M50 37l-8.500 9" />
            </g>
          </Ucs>
          <CommandBar>
            <CommandTools>
              <Icon name="grips" />
              <IconButton aria-label="关闭命令行"><Icon name="close" /></IconButton>
              <IconButton aria-label="自定义"><Icon name="wrench" /></IconButton>
            </CommandTools>
            <CommandLine>
              <Icon name="prompt" />
              <Caret $color="#666" />
              <input aria-label="命令" placeholder="键入命令" />
              <Caret $up $size={3} />
            </CommandLine>
          </CommandBar>
        </Canvas>

        <LayoutTabs>
          {["first", "prev", "next", "last"].map((n) => (
            <PageButton key={n} aria-label={n}><Icon name={n} /></PageButton>
          ))}
          <LayoutTab $active>模型</LayoutTab>
          <LayoutTab>布局1</LayoutTab>
          <LayoutTab>布局2</LayoutTab>
        </LayoutTabs>

        <StatusBar>
          <Coordinates>2261.8111, 1695.5846, 0.0000</Coordinates>
          <StatusGroup>
            {toggles.map(([icon, label, on]) => (
              <Toggle key={icon} $on={on} aria-label={label}><Icon name={icon} /></Toggle>
            ))}
          </StatusGroup>
          <Spacer />
          <StatusGroup>
            <Toggle $w={20}>模型</Toggle>
            <Toggle aria-label="布局"><Icon name="layoutView" /></Toggle>
            <Toggle aria-label="快速查看布局"><Icon name="quickView" /></Toggle>
          </StatusGroup>
          <Gap $w={12} />
          <StatusGroup>
            <Toggle $w={38}><Icon name="anno" />1:1<Caret $size={3} /></Toggle>
            <Toggle aria-label="注释可见性"><Icon name="annoVis" /></Toggle>
            <Toggle aria-label="自动缩放"><Icon name="annoAuto" /></Toggle>
          </StatusGroup>
          <Gap $w={4} />
          <StatusGroup>
            <Toggle aria-label="切换工作空间"><Icon name="gear" /></Toggle>
            <Toggle aria-label="锁定界面"><Icon name="toolbarLock" /></Toggle>
            <Toggle aria-label="硬件加速"><Icon name="sphere" /></Toggle>
          </StatusGroup>
          <Gap $w={4} />
          <BulbButton aria-label="隔离对象"><Icon name="bulb" /></BulbButton>
          <Gap $w={4} />
          <StatusGroup>
            <Toggle $w={7} aria-label="状态栏菜单"><Caret /></Toggle>
            <Toggle aria-label="全屏显示"><Icon name="cleanScreen" /></Toggle>
          </StatusGroup>
          <IconButton aria-label="调整大小"><Icon name="sizeGrip" /></IconButton>
        </StatusBar>
      </Frame>
    </>
  );
}
